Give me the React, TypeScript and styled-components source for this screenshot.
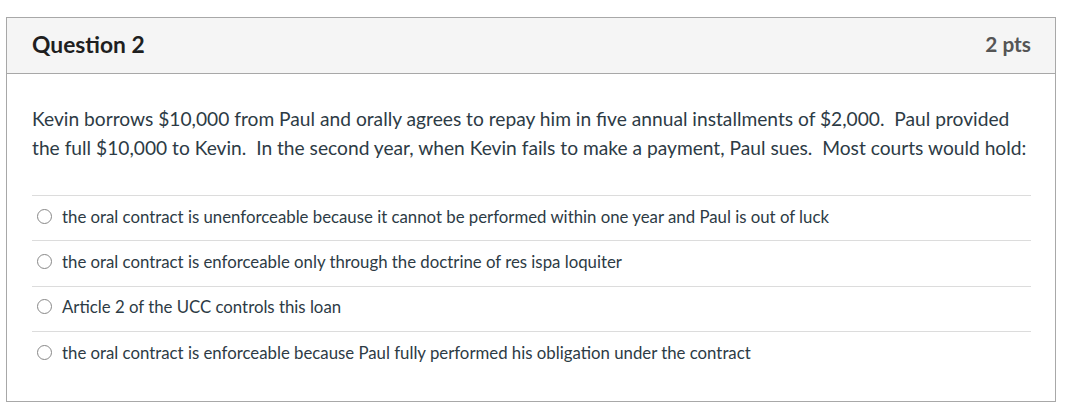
import styled, { createGlobalStyle } from 'styled-components';

const GlobalStyle = createGlobalStyle`
    body {
        margin: 0;
        background: #fff;
        font-family: Lato, 'Liberation Sans', sans-serif;
        color: #2d3b45;
    }
`;

const Card = styled.div`
    box-sizing: border-box;
    width: 1050px;
    margin: 17px 0 0 6px;
    border: 1px solid #a8a8a8;
    padding-bottom: 25px;
`;

const Header = styled.div`
    display: flex;
    align-items: center;
    justify-content: space-between;
    height: 55px;
    padding: 0 24px 0 25px;
    background: #f5f5f5;
    border-bottom: 1px solid #a8a8a8;
`;

const Title = styled.h2`
    margin: 0 0 4px;
    font-size: 22.8px;
    font-weight: 700;
    color: #1f1f1f;
`;

const Points = styled.span`
    margin-bottom: 4px;
    font-size: 20.8px;
    font-weight: 700;
    color: #555;
`;

const Body = styled.div`
    padding: 30px 24px 0 25px;
`;

const Prompt = styled.p`
    margin: 0 0 33px;
    font-size: 19.2px;
    line-height: 29px;
    color: #2d3b45;
`;

const Answer = styled.label`
    display: flex;
    align-items: center;
    gap: 10px;
    box-sizing: border-box;
    height: 45.3px;
    padding-bottom: 4px;
    border-top: 1px solid #dcdcdc;
    font-size: 16.8px;
    color: #2d3b45;
`;

const Radio = styled.span`
    box-sizing: border-box;
    flex: none;
    width: 15px;
    height: 15px;
    margin-left: 5px;
    border: 1px solid #888;
    border-radius: 50%;
    background: #fff;
`;

const answers = [
    'the oral contract is unenforceable because it cannot be performed within one year and Paul is out of luck',
    'the oral contract is enforceable only through the doctrine of res ispa loquiter',
    'Article 2 of the UCC controls this loan',
    'the oral contract is enforceable because Paul fully performed his obligation under the contract',
];

export default function App() {
    return (
        <>
            <GlobalStyle />
            <Card>
                <Header>
                    <Title>Question 2</Title>
                    <Points>2 pts</Points>
                </Header>
                <Body>
                    <Prompt>
                        Kevin borrows $10,000 from Paul and orally agrees to repay him in five annual
                        installments of $2,000.&nbsp; Paul provided the full $10,000 to Kevin.&nbsp; In the
                        second year, when Kevin fails to make a payment, Paul sues.&nbsp; Most courts would
                        hold:
                    </Prompt>
                    {answers.map((a) => (
                        <Answer key={a}>
                            <Radio />
                            {a}
                        </Answer>
                    ))}
                </Body>
            </Card>
        </>
    );
}
